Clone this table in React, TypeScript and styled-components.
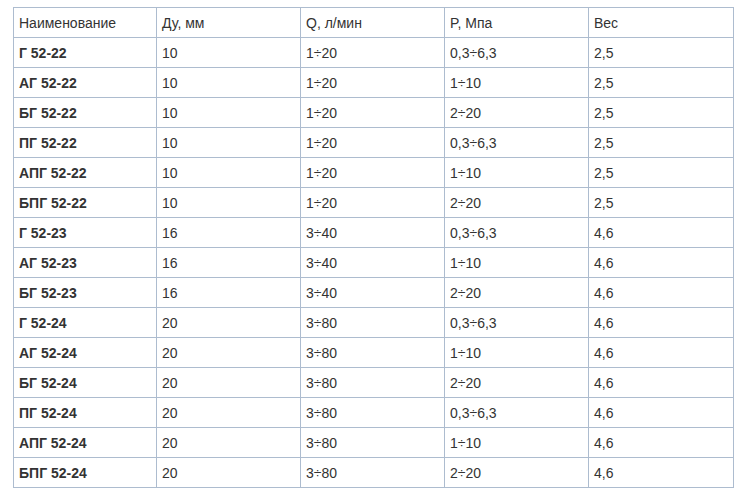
import React from 'react';
import styled, { createGlobalStyle } from 'styled-components';

const rows = [
  ['Г 52-22', '10', '1÷20', '0,3÷6,3', '2,5'],
  ['АГ 52-22', '10', '1÷20', '1÷10', '2,5'],
  ['БГ 52-22', '10', '1÷20', '2÷20', '2,5'],
  ['ПГ 52-22', '10', '1÷20', '0,3÷6,3', '2,5'],
  ['АПГ 52-22', '10', '1÷20', '1÷10', '2,5'],
  ['БПГ 52-22', '10', '1÷20', '2÷20', '2,5'],
  ['Г 52-23', '16', '3÷40', '0,3÷6,3', '4,6'],
  ['АГ 52-23', '16', '3÷40', '1÷10', '4,6'],
  ['БГ 52-23', '16', '3÷40', '2÷20', '4,6'],
  ['Г 52-24', '20', '3÷80', '0,3÷6,3', '4,6'],
  ['АГ 52-24', '20', '3÷80', '1÷10', '4,6'],
  ['БГ 52-24', '20', '3÷80', '2÷20', '4,6'],
  ['ПГ 52-24', '20', '3÷80', '0,3÷6,3', '4,6'],
  ['АПГ 52-24', '20', '3÷80', '1÷10', '4,6'],
  ['БПГ 52-24', '20', '3÷80', '2÷20', '4,6'],
];

const headers = ['Наименование', 'Ду, мм', 'Q, л/мин', 'P, Мпа', 'Вес'];
const colWidths = [143, 144, 144, 144, 145];

const GlobalStyle = createGlobalStyle`
  body {
    margin: 0;
    background: #ffffff;
    font-family: 'Liberation Sans', Arial, sans-serif;
  }
`;

const Page = styled.div`
  padding: 7px 0 0 13px;
`;

const Table = styled.table`
  border-collapse: collapse;
  table-layout: fixed;
  width: 721px;
  font-size: 14px;
  color: #333333;
`;

const Col = styled.col<{ $width: number }>`
  width: ${(p) => p.$width}px;
`;

const Cell = styled.td<{ $bold?: boolean }>`
  height: 29px;
  padding: 0 5px;
  border: 1px solid #adbccf;
  vertical-align: middle;
  font-weight: ${(p) => (p.$bold ? 'bold' : 'normal')};
  white-space: nowrap;
`;

const HeadCell = styled.th`
  height: 29px;
  padding: 0 5px;
  border: 1px solid #adbccf;
  vertical-align: middle;
  text-align: left;
  font-weight: normal;
  white-space: nowrap;
`;

const App = () => {
  return (
    <Page>
      <GlobalStyle />
      <Table>
        <colgroup>
          {colWidths.map((w, i) => (
            <Col key={i} $width={w} />
          ))}
        </colgroup>
        <thead>
          <tr>
            {headers.map((h) => (
              <HeadCell key={h}>{h}</HeadCell>
            ))}
          </tr>
        </thead>
        <tbody>
          {rows.map((r) => (
            <tr key={r[0]}>
              {r.map((v, i) => (
                <Cell key={i} $bold={i === 0}>
                  {v}
                </Cell>
              ))}
            </tr>
          ))}
        </tbody>
      </Table>
    </Page>
  );
};

export default App;
